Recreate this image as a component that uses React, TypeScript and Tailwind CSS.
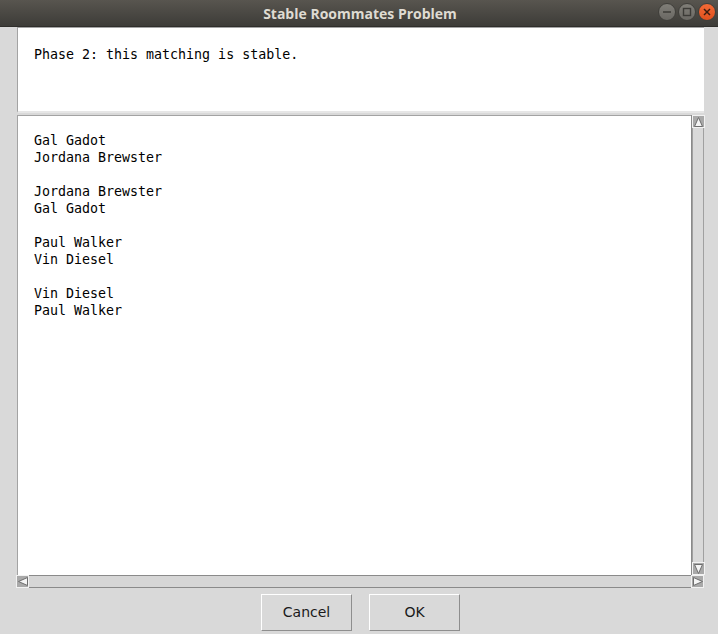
import React from "react";

const mono = { fontFamily: '"DejaVu Sans Mono", "Liberation Mono", monospace' };

const pairs = [
  ["Gal Gadot", "Jordana Brewster"],
  ["Jordana Brewster", "Gal Gadot"],
  ["Paul Walker", "Vin Diesel"],
  ["Vin Diesel", "Paul Walker"],
];

function Arrow({ dir }: { dir: "up" | "down" | "left" | "right" }) {
  const pts = {
    up: "1.5,10.5 5.5,1.5 9.5,10.5",
    down: "1.5,1.5 5.5,10.5 9.5,1.5",
    left: "10.5,1.5 1.5,5.5 10.5,9.5",
    right: "1.5,1.5 10.5,5.5 1.5,9.5",
  }[dir];
  return (
    <div className="w-[13px] h-[13px] bg-[#a9a9a9] border border-[#f2f2f2] flex items-center justify-center">
      <svg width="11" height="11" viewBox="0 0 11 11">
        <polygon points={pts} fill="#f4f4f4" stroke="#6e6e6e" strokeWidth="1" />
      </svg>
    </div>
  );
}

function WinButton({ kind }: { kind: "min" | "max" | "close" }) {
  const bg =
    kind === "close"
      ? "bg-gradient-to-b from-[#f26a36] to-[#e0501c]"
      : "bg-gradient-to-b from-[#807e78] to-[#6a6863]";
  return (
    <div className={`w-[18px] h-[18px] rounded-full ${bg} border border-[#403f3b] flex items-center justify-center`}>
      <svg width="10" height="10" viewBox="0 0 10 10">
        {kind === "min" && <line x1="1" y1="5" x2="9" y2="5" stroke="#3c3b37" strokeWidth="1.5" />}
        {kind === "max" && <rect x="1.5" y="1.5" width="7" height="7" fill="none" stroke="#3c3b37" strokeWidth="1.4" />}
        {kind === "close" && (
          <g stroke="#3a1c10" strokeWidth="1.5">
            <line x1="2" y1="2" x2="8" y2="8" />
            <line x1="8" y1="2" x2="2" y2="8" />
          </g>
        )}
      </svg>
    </div>
  );
}

export default function App() {
  return (
    <div className="w-[718px] h-[634px] bg-[#d9d9d9] flex flex-col overflow-hidden">
      {/* Title bar */}
      <div className="h-[27px] bg-gradient-to-b from-[#58554f] to-[#3d3c38] flex items-center relative border-b border-[#2f2e2b]">
        <div
          className="flex-1 text-center text-[14px] font-bold text-[#dfdbd2] pl-[2px]"
          style={{ fontFamily: '"Open Sans", "Noto Sans", sans-serif' }}
        >
          Stable Roommates Problem
        </div>
        <div className="absolute right-[2px] top-[3px] flex gap-[2px]">
          <WinButton kind="min" />
          <WinButton kind="max" />
          <WinButton kind="close" />
        </div>
      </div>

      {/* Status panel */}
      <div className="ml-[17px] mr-[14px] h-[86px] bg-white border-t border-l border-[#a3a3a3] border-b-2 border-b-[#e6e6e6] px-4 pt-[18px]">
        <div className="text-[13.3px] leading-[17px] text-black" style={mono}>
          Phase 2: this matching is stable.
        </div>
      </div>

      {/* Scroll pane */}
      <div className="ml-[16px] mr-[14px] mt-[2px] flex flex-col">
        <div className="flex h-[460px]">
          <div className="flex-1 bg-white border-t border-l border-[#a3a3a3] ml-[1px] px-4 pt-[16px]">
            <div className="text-[13.3px] leading-[17px] text-black" style={mono}>
              {pairs.map((p, i) => (
                <div key={i} className="mb-[17px]">
                  <div>{p[0]}</div>
                  <div>{p[1]}</div>
                </div>
              ))}
            </div>
          </div>
          <div className="w-[13px] flex flex-col bg-[#d6d6d6] border-l border-[#8a8a8a]">
            <Arrow dir="up" />
            <div className="flex-1 border-x border-[#a0a0a0] bg-[#d9d9d9]" />
            <Arrow dir="down" />
          </div>
        </div>
        <div className="flex h-[13px]">
          <Arrow dir="left" />
          <div className="flex-1 border-y border-[#8a8a8a] bg-[#d6d6d6]" />
          <Arrow dir="right" />
        </div>
      </div>

      {/* Buttons */}
      <div className="flex justify-center gap-[17px] mt-[6px] pl-[3px]">
        {["Cancel", "OK"].map((t) => (
          <button
            key={t}
            className="w-[91px] h-[37px] bg-[#d9d9d9] border-t border-l border-t-white border-l-white border-b border-r border-b-[#8e8e8e] border-r-[#8e8e8e] text-[14px] text-[#1a1a1a]"
            style={{ fontFamily: '"DejaVu Sans", "Liberation Sans", sans-serif' }}
          >
            {t}
          </button>
        ))}
      </div>
    </div>
  );
}
